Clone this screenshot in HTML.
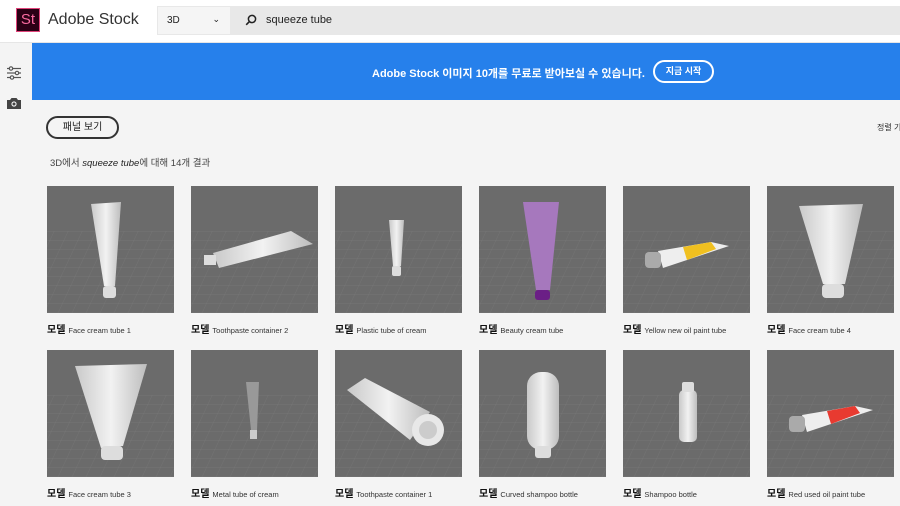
<!DOCTYPE html>
<html><head><meta charset="utf-8">
<style>
*{margin:0;padding:0;box-sizing:border-box}
body{width:900px;height:506px;overflow:hidden;background:#f4f4f4;font-family:"Liberation Sans","Noto Sans CJK KR",sans-serif;position:relative}
.hdr{position:absolute;left:0;top:0;width:900px;height:43px;background:#fff;border-bottom:1px solid #e6e6e6}
.logo{position:absolute;left:16px;top:8px;width:24px;height:24px;background:#2b0015;border:1px solid #e0447a;color:#f96aa0;font-size:15px;line-height:22px;text-align:center}
.brand{position:absolute;left:48px;top:11px;font-size:16px;color:#333}
.sel{position:absolute;left:157px;top:6px;width:74px;height:29px;background:#f5f5f5;border:1px solid #e8e8e8;font-size:10px;color:#222;padding:8px 0 0 9px}
.sel span{position:absolute;right:10px;top:7px;font-size:9px}
.search{position:absolute;left:231px;top:6px;width:669px;height:29px;background:#e8e8e8;font-size:11px;color:#222;padding:8px 0 0 35px}
.side{position:absolute;left:0;top:43px;width:32px;height:463px;background:#f4f4f4}
.banner{position:absolute;left:32px;top:43px;width:868px;height:57px;background:#2680eb;color:#fff;font-size:11px;font-weight:bold}
.banner .t{position:absolute;left:340px;top:22px;white-space:nowrap}
.banner .b{position:absolute;left:621px;top:17px;width:61px;height:23px;border:2px solid #fff;border-radius:12px;font-size:9px;text-align:center;line-height:19px}
.panel{position:absolute;left:46px;top:116px;width:73px;height:23px;border:2px solid #333;border-radius:12px;font-size:10px;text-align:center;line-height:19px;color:#222}
.sort{position:absolute;left:877px;top:122px;font-size:8px;color:#333;white-space:nowrap}
.res{position:absolute;left:50px;top:155px;font-size:9.5px;color:#444}
.tile{position:absolute;width:127px;height:127px;background:#6b6b6b;overflow:hidden}
.lab{position:absolute;font-size:7.5px;color:#333;white-space:nowrap}
.lab b{font-size:10px;color:#111;font-weight:bold;margin-right:3px}
</style></head><body>
<div class="hdr">
<div class="logo">St</div><div class="brand">Adobe Stock</div>
<div class="sel">3D<span>⌄</span></div>
<div class="search"><svg style="position:absolute;left:14px;top:8px" width="12" height="12" viewBox="0 0 12 12"><circle cx="7" cy="5" r="3.6" fill="none" stroke="#222" stroke-width="1.5"/><line x1="4.4" y1="7.6" x2="1.2" y2="10.8" stroke="#222" stroke-width="1.6"/></svg>squeeze tube</div>
</div>
<div class="side">
<svg style="position:absolute;left:6px;top:23px" width="16" height="14" viewBox="0 0 16 14"><g stroke="#555" stroke-width="1.2" fill="#f4f4f4"><line x1="1" y1="2.5" x2="15" y2="2.5"/><line x1="1" y1="7" x2="15" y2="7"/><line x1="1" y1="11.5" x2="15" y2="11.5"/><circle cx="5" cy="2.5" r="1.7"/><circle cx="11" cy="7" r="1.7"/><circle cx="6" cy="11.5" r="1.7"/></g></svg>
<svg style="position:absolute;left:7px;top:54px" width="14" height="12" viewBox="0 0 14 12"><path d="M0 3h3l1.5-2h5L11 3h3v9H0z" fill="#444"/><circle cx="7" cy="7" r="2.6" fill="#f4f4f4"/><circle cx="7" cy="7" r="1.5" fill="#444"/></svg>
</div>
<div class="banner"><div class="t">Adobe Stock 이미지 10개를 무료로 받아보실 수 있습니다.</div><div class="b">지금 시작</div></div>
<div class="panel">패널 보기</div>
<div class="sort">정렬 기준</div>
<div class="res">3D에서 <i style="color:#222">squeeze tube</i>에 대해 14개 결과</div>

<svg width="0" height="0" style="position:absolute"><defs>
<pattern id="g" width="14" height="9" patternUnits="userSpaceOnUse" patternTransform="skewX(-25)"><path d="M0 0H14M0 0V9" stroke="#7a7a7a" stroke-width="0.6" fill="none"/></pattern>
<linearGradient id="w" x1="0" x2="1"><stop offset="0" stop-color="#c9c9c9"/><stop offset=".5" stop-color="#f2f2f2"/><stop offset="1" stop-color="#bdbdbd"/></linearGradient>
</defs></svg>

<div class="tile" style="left:47px;top:186px"><svg width="127" height="127"><rect y="45" width="127" height="82" fill="url(#g)"/><path d="M44 18L74 16L68 100L57 100Z" fill="url(#w)"/><rect x="56" y="100" width="13" height="12" rx="3" fill="#ddd"/></svg></div>
<div class="lab" style="left:47px;top:321px"><b>모델</b>Face cream tube 1</div>
<div class="tile" style="left:191px;top:186px"><svg width="127" height="127"><rect y="45" width="127" height="82" fill="url(#g)"/><path d="M22 67L100 45L122 58L28 82Z" fill="url(#w)"/><rect x="13" y="69" width="12" height="10" fill="#ddd"/></svg></div>
<div class="lab" style="left:191px;top:321px"><b>모델</b>Toothpaste container 2</div>
<div class="tile" style="left:335px;top:186px"><svg width="127" height="127"><rect y="45" width="127" height="82" fill="url(#g)"/><path d="M54 34L69 34L66 80L58 80Z" fill="url(#w)"/><rect x="57" y="80" width="9" height="10" rx="2" fill="#ddd"/></svg></div>
<div class="lab" style="left:335px;top:321px"><b>모델</b>Plastic tube of cream</div>
<div class="tile" style="left:479px;top:186px"><svg width="127" height="127"><rect y="45" width="127" height="82" fill="url(#g)"/><path d="M44 16L80 16L71 104L57 104Z" fill="#a678bd"/><rect x="56" y="104" width="15" height="10" rx="3" fill="#6b1f86"/></svg></div>
<div class="lab" style="left:479px;top:321px"><b>모델</b>Beauty cream tube</div>
<div class="tile" style="left:623px;top:186px"><svg width="127" height="127"><rect y="45" width="127" height="82" fill="url(#g)"/><path d="M35 65L88 56L106 60L40 82Z" fill="#eee"/><path d="M60 61L88 56L93 63L64 74Z" fill="#f0c020"/><rect x="22" y="66" width="16" height="16" rx="4" fill="#aaa"/></svg></div>
<div class="lab" style="left:623px;top:321px"><b>모델</b>Yellow new oil paint tube</div>
<div class="tile" style="left:767px;top:186px"><svg width="127" height="127"><rect y="45" width="127" height="82" fill="url(#g)"/><path d="M32 20L96 18L78 98L56 98Z" fill="url(#w)"/><rect x="55" y="98" width="22" height="14" rx="4" fill="#ddd"/></svg></div>
<div class="lab" style="left:767px;top:321px"><b>모델</b>Face cream tube 4</div>

<div class="tile" style="left:47px;top:350px"><svg width="127" height="127"><rect y="45" width="127" height="82" fill="url(#g)"/><path d="M28 16L100 14L76 96L54 98Z" fill="url(#w)"/><rect x="54" y="96" width="22" height="14" rx="4" fill="#ddd"/></svg></div>
<div class="lab" style="left:47px;top:485px"><b>모델</b>Face cream tube 3</div>
<div class="tile" style="left:191px;top:350px"><svg width="127" height="127"><rect y="45" width="127" height="82" fill="url(#g)"/><path d="M55 32L68 32L66 80L60 80Z" fill="#999"/><rect x="59" y="80" width="7" height="9" fill="#ccc"/></svg></div>
<div class="lab" style="left:191px;top:485px"><b>모델</b>Metal tube of cream</div>
<div class="tile" style="left:335px;top:350px"><svg width="127" height="127"><rect y="45" width="127" height="82" fill="url(#g)"/><path d="M12 40L30 28L95 62L75 90Z" fill="url(#w)"/><circle cx="93" cy="80" r="16" fill="#e8e8e8"/><circle cx="93" cy="80" r="9" fill="#ccc"/></svg></div>
<div class="lab" style="left:335px;top:485px"><b>모델</b>Toothpaste container 1</div>
<div class="tile" style="left:479px;top:350px"><svg width="127" height="127"><rect y="45" width="127" height="82" fill="url(#g)"/><rect x="48" y="22" width="32" height="78" rx="14" fill="url(#w)"/><rect x="56" y="96" width="16" height="12" rx="3" fill="#ddd"/></svg></div>
<div class="lab" style="left:479px;top:485px"><b>모델</b>Curved shampoo bottle</div>
<div class="tile" style="left:623px;top:350px"><svg width="127" height="127"><rect y="45" width="127" height="82" fill="url(#g)"/><rect x="56" y="40" width="18" height="52" rx="5" fill="url(#w)"/><rect x="59" y="32" width="12" height="10" rx="2" fill="#ddd"/></svg></div>
<div class="lab" style="left:623px;top:485px"><b>모델</b>Shampoo bottle</div>
<div class="tile" style="left:767px;top:350px"><svg width="127" height="127"><rect y="45" width="127" height="82" fill="url(#g)"/><path d="M35 65L88 56L106 60L40 82Z" fill="#eee"/><path d="M60 61L88 56L93 63L64 74Z" fill="#e83a30"/><rect x="22" y="66" width="16" height="16" rx="4" fill="#aaa"/></svg></div>
<div class="lab" style="left:767px;top:485px"><b>모델</b>Red used oil paint tube</div>
</body></html>
